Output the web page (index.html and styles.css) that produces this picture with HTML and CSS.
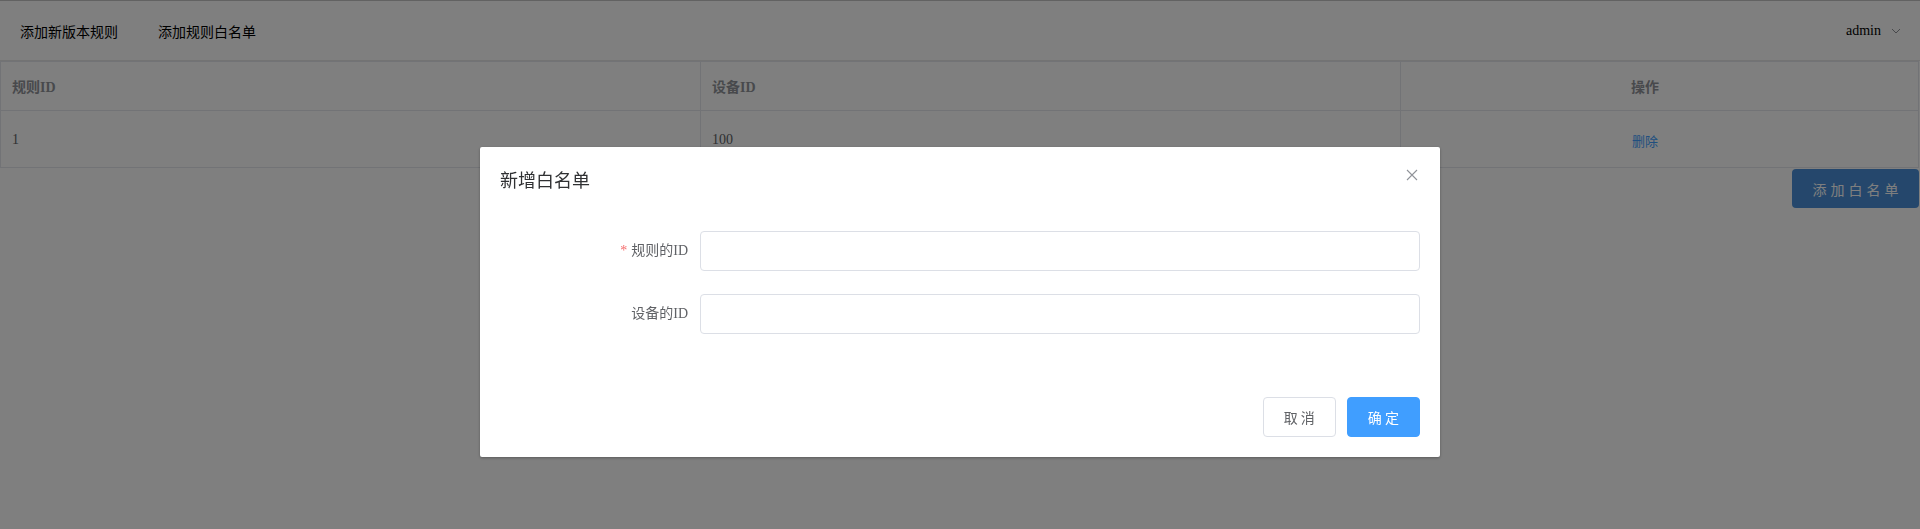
FILE: index.html
```html
<!DOCTYPE html>
<html lang="zh-CN">
<head>
<meta charset="utf-8">
<title>白名单</title>
<link rel="stylesheet" href="styles.css">
</head>
<body>
<header class="nav">
  <ul class="menu">
    <li class="menu-item">添加新版本规则</li>
    <li class="menu-item">添加规则白名单</li>
  </ul>
  <div class="user">
    <span class="user-name">admin</span>
    <svg class="chevron" width="10" height="6" viewBox="0 0 10 6"><path d="M1 1 L5 5 L9 1" fill="none" stroke="#909399" stroke-width="1"/></svg>
  </div>
</header>
<table class="grid">
  <colgroup><col class="c1"><col class="c2"><col class="c3"></colgroup>
  <thead>
    <tr><th>规则ID</th><th>设备ID</th><th class="center">操作</th></tr>
  </thead>
  <tbody>
    <tr><td>1</td><td>100</td><td class="center"><span class="link">删除</span></td></tr>
  </tbody>
</table>
<div class="actions">
  <button class="btn-add">添加白名单</button>
</div>

<div class="mask">
  <div class="dialog">
    <div class="dialog-header">
      <span class="dialog-title">新增白名单</span>
      <button class="dialog-close" aria-label="关闭">
        <svg width="16" height="16" viewBox="0 0 16 16"><path d="M3 3 L13 13 M13 3 L3 13" stroke="#909399" stroke-width="1.1" fill="none"/></svg>
      </button>
    </div>
    <div class="dialog-body">
      <div class="form-item">
        <label class="form-label"><span class="req">*</span>规则的ID</label>
        <input class="form-input" type="text">
      </div>
      <div class="form-item">
        <label class="form-label">设备的ID</label>
        <input class="form-input" type="text">
      </div>
    </div>
    <div class="dialog-footer">
      <button class="btn btn-default">取 消</button>
      <button class="btn btn-primary">确 定</button>
    </div>
  </div>
</div>
</body>
</html>
```

FILE: styles.css
```css
* { box-sizing: border-box; }
html, body { margin: 0; padding: 0; }
body {
  font-family: "Liberation Serif", "Noto Sans CJK SC", serif;
  font-size: 14px;
  color: #303133;
  background: #fff;
  width: 1920px;
  height: 529px;
  overflow: hidden;
}

.nav {
  display: flex;
  justify-content: space-between;
  align-items: center;
  height: 61px;
  border-top: 1px solid #c4c4c4;
  border-bottom: 1px solid #e6e6e6;
}
.menu {
  display: flex;
  list-style: none;
  margin: 0;
  padding: 0;
}
.menu-item {
  padding: 0 20px;
  line-height: 58px;
  font-family: "Noto Sans CJK SC", sans-serif;
  font-size: 14px;
  color: #000;
}
.user {
  display: flex;
  align-items: center;
  gap: 10px;
  padding-right: 19px;
}
.user-name {
  font-family: "Liberation Serif", serif;
  font-size: 14px;
  color: #000;
}
.chevron { display: block; margin-top: 1px; }

.grid {
  width: 1919px;
  border-collapse: collapse;
  border: 1px solid #dcdfe6;
  table-layout: fixed;
}
.c1 { width: 700px; }
.c2 { width: 700px; }
.grid th, .grid td {
  border: 1px solid #e4e7ed;
  text-align: left;
  padding: 0 11px;
  font-size: 14px;
}
.grid th {
  height: 49px;
  color: #909399;
  font-weight: bold;
}
.grid td {
  height: 57px;
  color: #606266;
  padding-top: 2px;
}
.grid .center { text-align: center; padding-right: 40px; }
.link { color: #409eff; font-family: "Noto Sans CJK SC", sans-serif; font-size: 13px; }

.actions {
  display: flex;
  justify-content: flex-end;
  padding-top: 1px;
  padding-right: 1px;
}
.btn-add {
  height: 39px;
  width: 127px;
  border: none;
  border-radius: 4px;
  background: #4a8fd8;
  color: #fff;
  font-family: "Noto Sans CJK SC", sans-serif;
  font-size: 14px;
  letter-spacing: 4px;
  padding: 0 0 0 4px;
}

.mask {
  position: fixed;
  inset: 0;
  background: rgba(0, 0, 0, 0.5);
}
.dialog {
  position: relative;
  width: 960px;
  margin: 147px auto 0;
  background: #fff;
  border-radius: 2px;
  box-shadow: 0 1px 3px rgba(0, 0, 0, 0.3);
}
.dialog-header {
  position: relative;
  padding: 20px 20px 10px;
}
.dialog-title {
  display: block;
  font-family: "Noto Sans CJK SC", sans-serif;
  font-size: 18px;
  line-height: 24px;
  color: #303133;
}
.dialog-close {
  position: absolute;
  top: 20px;
  right: 20px;
  width: 16px;
  height: 16px;
  padding: 0;
  border: none;
  background: transparent;
}
.dialog-close svg { display: block; }

.dialog-body {
  padding: 30px 20px 31px;
}
.form-item {
  display: flex;
  align-items: center;
  margin-bottom: 23px;
}
.form-item:last-child { margin-bottom: 22px; }
.form-label {
  width: 200px;
  padding-right: 12px;
  text-align: right;
  font-family: "Liberation Serif", "Noto Sans CJK SC", serif;
  font-size: 14px;
  line-height: 40px;
  color: #606266;
}
.req { color: #f56c6c; margin-right: 4px; }
.form-input {
  flex: 1;
  height: 40px;
  border: 1px solid #dcdfe6;
  border-radius: 4px;
  padding: 0 15px;
  font-size: 14px;
  outline: none;
}

.dialog-footer {
  display: flex;
  justify-content: flex-end;
  gap: 11px;
  padding: 10px 20px 20px;
}
.btn {
  height: 40px;
  padding: 0 20px;
  border-radius: 4px;
  font-family: "Noto Sans CJK SC", sans-serif;
  font-size: 14px;
}
.btn-default {
  background: #fff;
  border: 1px solid #dcdfe6;
  color: #606266;
}
.btn-primary {
  background: #409eff;
  border: 1px solid #409eff;
  color: #fff;
}
```
